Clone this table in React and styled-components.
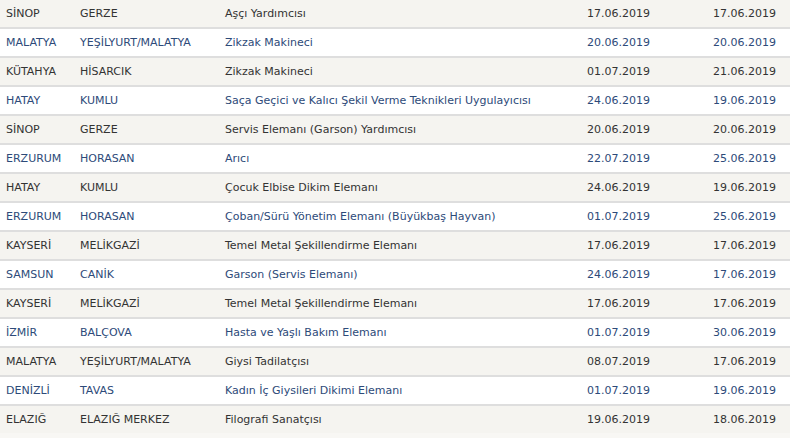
import styled, { createGlobalStyle } from "styled-components";

const GlobalStyle = createGlobalStyle`
  html, body {
    margin: 0;
    padding: 0;
    background: #f8f7f4;
  }
`;

const Table = styled.div`
  width: 790px;
  display: flex;
  flex-direction: column;
  font-family: "DejaVu Sans", Verdana, sans-serif;
  font-size: 11px;
`;

const Row = styled.div`
  display: grid;
  grid-template-columns: 74px 145px 1fr 100px 126px;
  align-items: center;
  height: 27px;
  padding-right: 8px;
  background: ${(p) => (p.$alt ? "#ffffff" : "#f5f4f0")};
  color: ${(p) => (p.$alt ? "#2d4a79" : "#333333")};
  border-bottom: ${(p) => (p.$last ? "0" : "2px solid #dedede")};
`;

const Cell = styled.div`
  padding: 0 6px;
  white-space: nowrap;
  text-align: ${(p) => (p.$right ? "right" : "left")};
`;

const rows = [
  ["SİNOP", "GERZE", "Aşçı Yardımcısı", "17.06.2019", "17.06.2019"],
  ["MALATYA", "YEŞİLYURT/MALATYA", "Zikzak Makineci", "20.06.2019", "20.06.2019"],
  ["KÜTAHYA", "HİSARCIK", "Zikzak Makineci", "01.07.2019", "21.06.2019"],
  ["HATAY", "KUMLU", "Saça Geçici ve Kalıcı Şekil Verme Teknikleri Uygulayıcısı", "24.06.2019", "19.06.2019"],
  ["SİNOP", "GERZE", "Servis Elemanı (Garson) Yardımcısı", "20.06.2019", "20.06.2019"],
  ["ERZURUM", "HORASAN", "Arıcı", "22.07.2019", "25.06.2019"],
  ["HATAY", "KUMLU", "Çocuk Elbise Dikim Elemanı", "24.06.2019", "19.06.2019"],
  ["ERZURUM", "HORASAN", "Çoban/Sürü Yönetim Elemanı (Büyükbaş Hayvan)", "01.07.2019", "25.06.2019"],
  ["KAYSERİ", "MELİKGAZİ", "Temel Metal Şekillendirme Elemanı", "17.06.2019", "17.06.2019"],
  ["SAMSUN", "CANİK", "Garson (Servis Elemanı)", "24.06.2019", "17.06.2019"],
  ["KAYSERİ", "MELİKGAZİ", "Temel Metal Şekillendirme Elemanı", "17.06.2019", "17.06.2019"],
  ["İZMİR", "BALÇOVA", "Hasta ve Yaşlı Bakım Elemanı", "01.07.2019", "30.06.2019"],
  ["MALATYA", "YEŞİLYURT/MALATYA", "Giysi Tadilatçısı", "08.07.2019", "17.06.2019"],
  ["DENİZLİ", "TAVAS", "Kadın İç Giysileri Dikimi Elemanı", "01.07.2019", "19.06.2019"],
  ["ELAZIĞ", "ELAZIĞ MERKEZ", "Filografi Sanatçısı", "19.06.2019", "18.06.2019"],
];

export default function App() {
  return (
    <>
      <GlobalStyle />
      <Table>
        {rows.map((r, i) => (
          <Row key={i} $alt={i % 2 === 1} $last={i === rows.length - 1}>
            <Cell>{r[0]}</Cell>
            <Cell>{r[1]}</Cell>
            <Cell>{r[2]}</Cell>
            <Cell $right>{r[3]}</Cell>
            <Cell $right>{r[4]}</Cell>
          </Row>
        ))}
      </Table>
    </>
  );
}
